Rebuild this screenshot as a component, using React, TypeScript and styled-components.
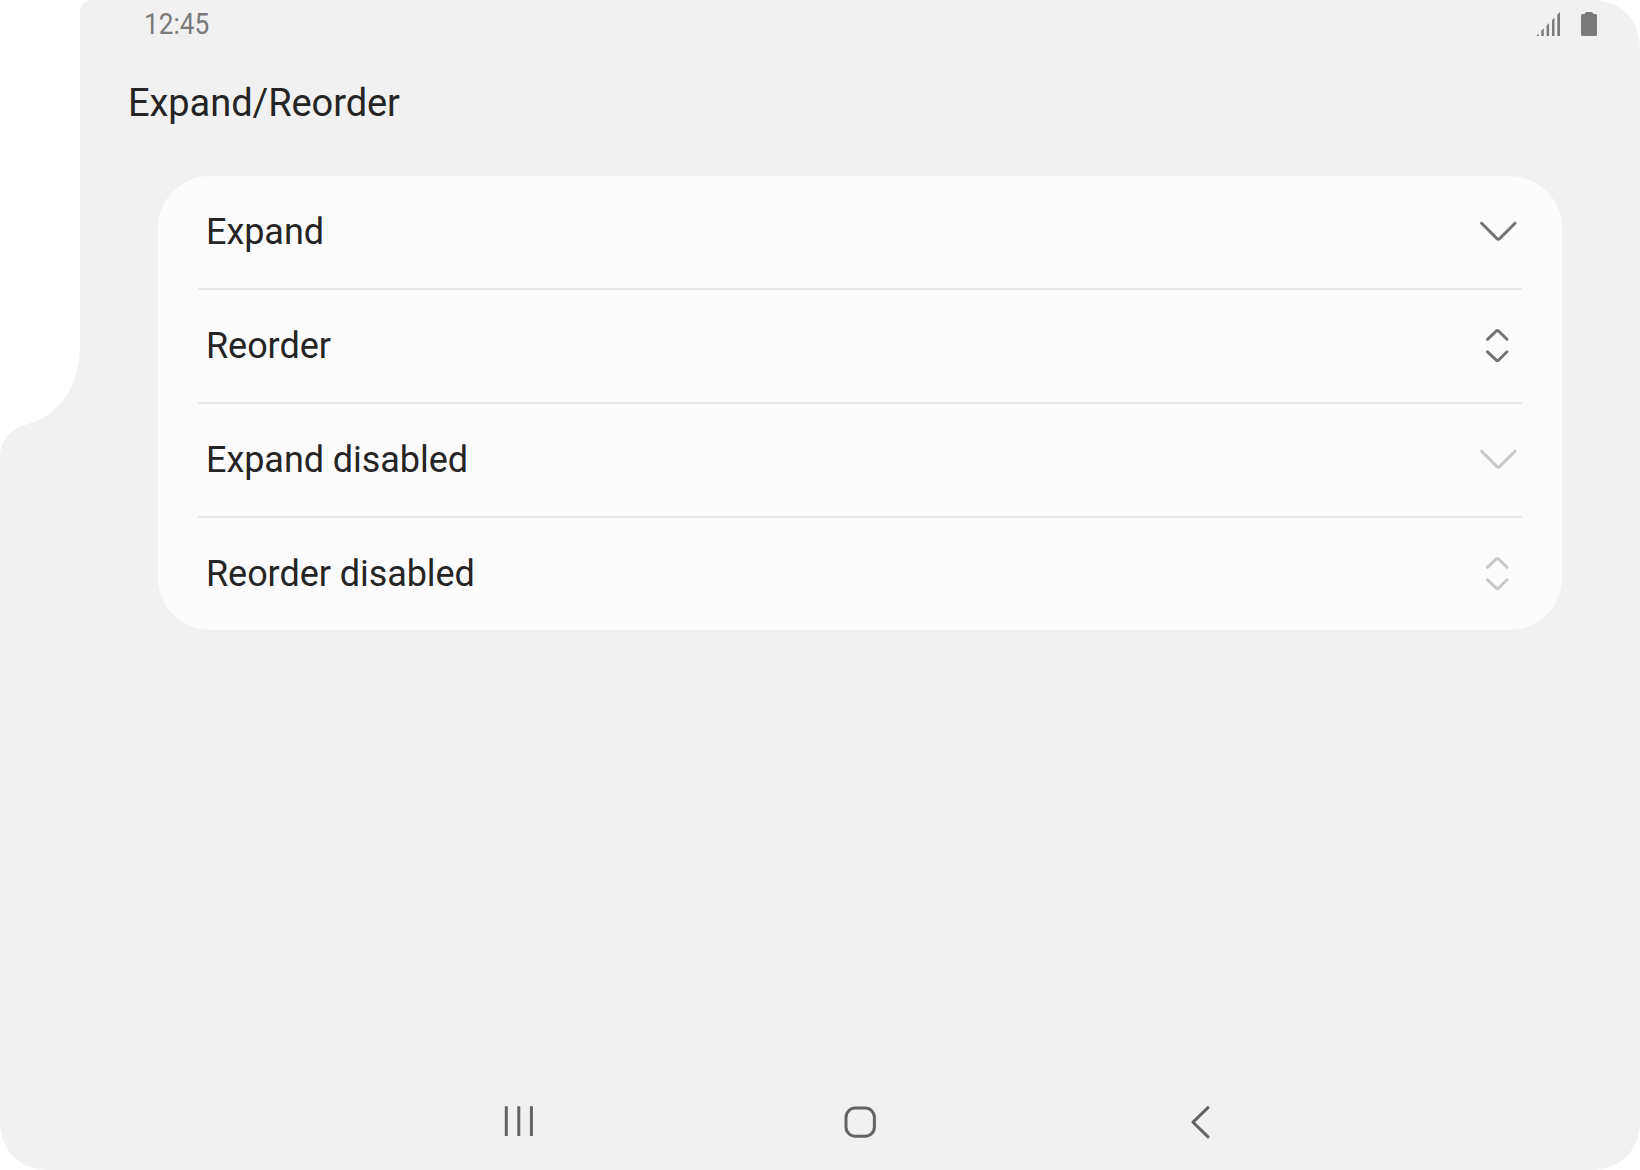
import React from "react";
import styled, { createGlobalStyle } from "styled-components";

const GlobalStyle = createGlobalStyle`
  *, *::before, *::after { box-sizing: border-box; }
  body { margin: 0; background: #ffffff; }
`;

const Screen = styled.div`
  display: flex;
  flex-direction: column;
  width: 1640px;
  height: 1170px;
  background: #f1f1f1;
  color: #252525;
  font-family: Roboto, "Noto Sans", sans-serif;
  clip-path: path("M80 14C80 5 85 0 94 0H1592C1620 0 1640 20 1640 48V1122C1640 1150 1620 1170 1592 1170H48C20 1170 0 1150 0 1122V453C2 438 12 428 28 424C58 416 80 386 80 347Z");
`;

const StatusBar = styled.header`
  display: flex;
  align-items: center;
  justify-content: space-between;
  height: 48px;
  padding: 0 43px 0 144px;
`;

const Clock = styled.span`
  font-size: 29px;
  line-height: 34px;
  color: #7a7a7a;
  transform: scaleX(0.905);
  transform-origin: left center;
`;

const StatusIcons = styled.div`
  display: flex;
  gap: 21px;
`;

const Title = styled.h1`
  margin: 0;
  padding: 33px 128px 0;
  height: 128px;
  font-size: 38px;
  line-height: 44px;
  font-weight: 400;
  letter-spacing: -0.06px;
`;

const Card = styled.ul`
  list-style: none;
  margin: 0 78px 0 158px;
  padding: 0 40px;
  background: #fcfcfd;
  border-radius: 52px;
`;

const Row = styled.li`
  display: flex;
  align-items: center;
  justify-content: space-between;
  height: 112px;
  padding: 0 0 0 8px;

  & + & {
    height: 114px;
    border-top: 2px solid #e8e8e9;
  }
`;

const Label = styled.span`
  font-size: 36px;
  line-height: 42px;
  letter-spacing: -0.06px;
`;

const RowIcon = styled.svg<{ $disabled?: boolean }>`
  width: 48px;
  height: 48px;
  fill: none;
  stroke: ${({ $disabled }) => ($disabled ? "#c8c8c8" : "#747474")};
  stroke-width: 3;
  stroke-linecap: round;
  stroke-linejoin: round;
`;

const NavBar = styled.nav`
  display: flex;
  justify-content: space-between;
  margin-top: auto;
  height: 72px;
  padding: 0 415px 0 495px;
`;

const NavIcon = styled.svg<{ $cap?: "butt" | "round" }>`
  width: 48px;
  height: 48px;
  fill: none;
  stroke: #636363;
  stroke-width: 3;
  stroke-linecap: ${({ $cap = "round" }) => $cap};
  stroke-linejoin: round;
`;

type Kind = "expand" | "reorder";

const paths: Record<Kind, string> = {
  expand: "M7.6 15.2L23 30.6Q24.3 31.8 25.6 30.6L41 15.2",
  reorder: "M13.5 17.3L22.3 9Q23.4 8 24.5 9L33 17.3M13.5 29.8L22.3 38.2Q23.4 39.2 24.5 38.2L33 29.8",
};

const items: { label: string; kind: Kind; disabled?: boolean }[] = [
  { label: "Expand", kind: "expand" },
  { label: "Reorder", kind: "reorder" },
  { label: "Expand disabled", kind: "expand", disabled: true },
  { label: "Reorder disabled", kind: "reorder", disabled: true },
];

export default function App() {
  return (
    <>
      <GlobalStyle />
      <Screen>
        <StatusBar>
          <Clock>12:45</Clock>
          <StatusIcons>
            <svg width="24" height="24" viewBox="0 0 24 24" fill="#7a7a7a">
              <path d="M0.3 24L2.7 21.6V24ZM5.3 24V18.7L7.8 16.2V24ZM10.6 24V13.4L13.1 10.9V24ZM16 24V8L18.5 5.5V24ZM21.3 24V2.7L24 0V24Z" />
            </svg>
            <svg width="16" height="24" viewBox="0 0 16 24" fill="#7a7a7a">
              <path d="M5.5 0H10.5Q12 0 12.3 2H14.5Q16 2 16 3.5V22.5Q16 24 14.5 24H1.5Q0 24 0 22.5V3.5Q0 2 1.5 2H3.7Q4 0 5.5 0Z" />
            </svg>
          </StatusIcons>
        </StatusBar>
        <Title>Expand/Reorder</Title>
        <Card>
          {items.map(({ label, kind, disabled }) => (
            <Row key={label}>
              <Label>{label}</Label>
              <RowIcon viewBox="0 0 48 48" $disabled={disabled}>
                <path d={paths[kind]} />
              </RowIcon>
            </Row>
          ))}
        </Card>
        <NavBar>
          <NavIcon viewBox="0 0 48 48" $cap="butt">
            <path d="M11.3 8.2V38M23.8 8.2V38M36.4 8.2V38" />
          </NavIcon>
          <NavIcon viewBox="0 0 48 48">
            <rect x="10" y="10" width="28.4" height="28.2" rx="9.3" />
          </NavIcon>
          <NavIcon viewBox="0 0 48 48">
            <path d="M31 9.7L16 24.2L31 38.9" />
          </NavIcon>
        </NavBar>
      </Screen>
    </>
  );
}
